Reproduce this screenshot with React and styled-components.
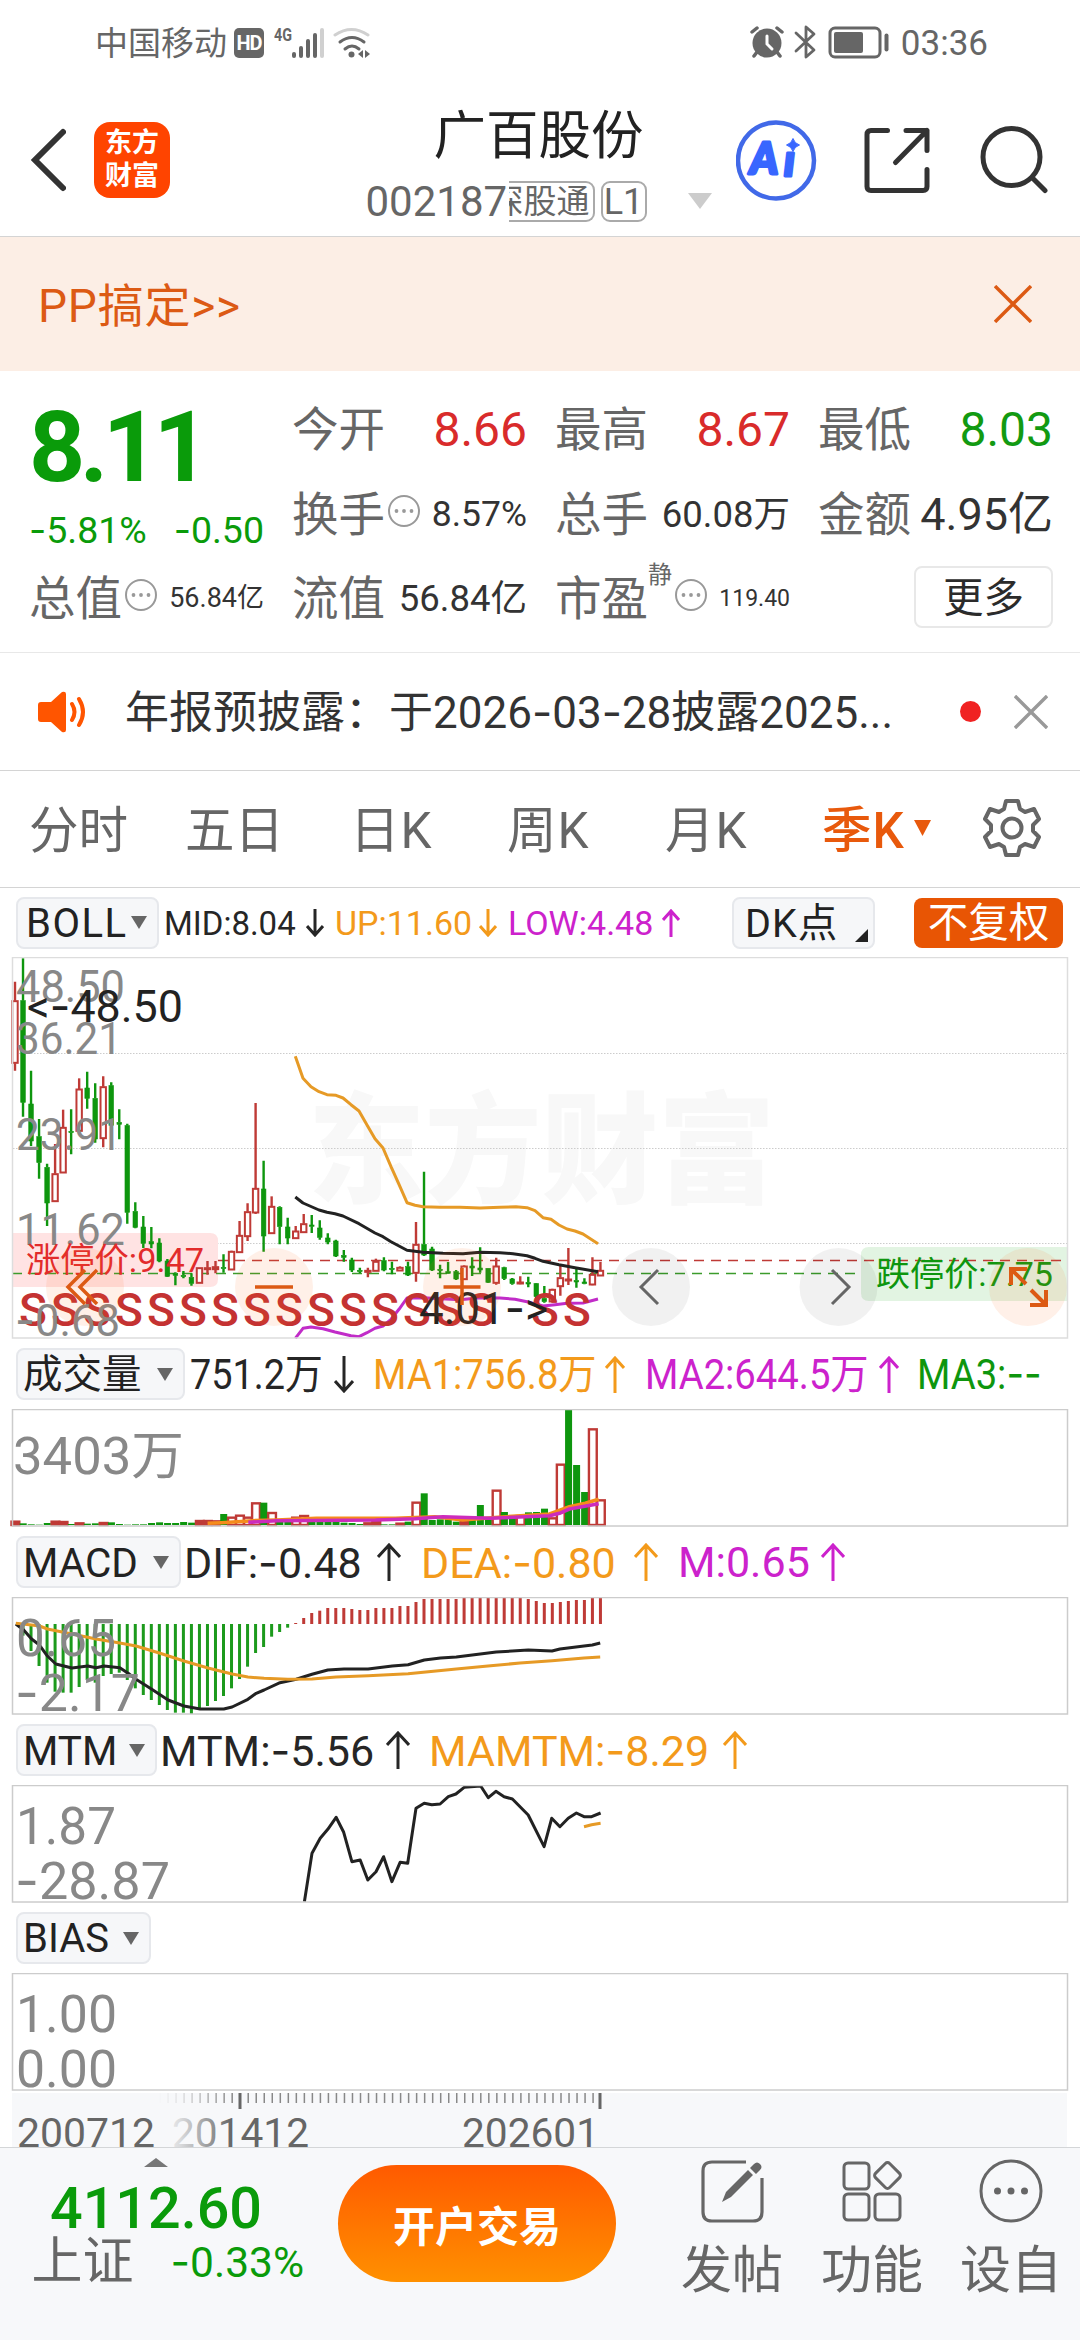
import React from "react";
import styled, { createGlobalStyle } from "styled-components";

const FONT = `Roboto, "Noto Sans CJK SC", sans-serif`;

const GlobalStyle = createGlobalStyle`
  * {
    box-sizing: border-box;
  }
  body {
    margin: 0;
    background: #fff;
    font-family: ${FONT};
    color: #2b2b2b;
  }
  svg {
    display: block;
    flex: none;
  }
`;

const Page = styled.div`
  width: 1080px;
  height: 2340px;
  overflow: hidden;
  display: flex;
  flex-direction: column;
  background: #fff;
`;

// one line of text, w keeps the columns aligned, sx squeezes the glyphs
const Txt = styled.span`
  display: block;
  flex: none;
  white-space: nowrap;
  line-height: 1.2;
  padding-top: 2px;
  transform-origin: 0 50%;
  font-size: ${(p) => p.$size}px;
  color: ${(p) => p.$color || "inherit"};
  font-weight: ${(p) => p.$weight || 400};
  letter-spacing: ${(p) => p.$ls || 0}px;
  width: ${(p) => (p.$w ? p.$w + "px" : "auto")};
  margin-left: ${(p) => p.$ml || 0}px;
  transform: ${(p) => (p.$sx ? `scaleX(${p.$sx})` : "none")};
`;

// Roboto's minus is too short for numbers
const Dash = styled.span`
  font-family: Inter, sans-serif;
`;
const dashed = (text) =>
  text.split(/(-)/).map((part, i) => (part === "-" ? <Dash key={i}>-</Dash> : part));

/* ---------- status bar ---------- */
const StatusBar = styled.div`
  height: 84px;
  flex: none;
  display: flex;
  align-items: center;
  justify-content: space-between;
  padding: 2px 92px 0 95px;
  color: #666;
`;
const StatusGroup = styled.div`
  display: flex;
  align-items: center;
`;
const HdBadge = styled.div`
  width: 30px;
  height: 30px;
  margin: 0 10px 0 7px;
  border-radius: 5px;
  background: #666;
  color: #fff;
  font-size: 20px;
  font-weight: 700;
  letter-spacing: -1px;
  line-height: 30px;
  text-align: center;
`;

const StatusIcons = () => (
  <StatusBar>
    <StatusGroup>
      <Txt $size={33}>中国移动</Txt>
      <HdBadge>HD</HdBadge>
      <svg width="98" height="32" viewBox="274 26 98 32">
        <text x="274" y="40" fontSize="18" fontWeight="700" fill="#666" textLength="18" lengthAdjust="spacingAndGlyphs">4G</text>
        <g fill="#666">
          <rect x="292" y="51" width="4" height="6" rx="2" />
          <rect x="299" y="45" width="4" height="12" rx="2" />
          <rect x="306" y="38" width="4" height="19" rx="2" />
          <rect x="313" y="32" width="4" height="25" rx="2" />
          <rect x="320" y="27" width="4" height="30" rx="2" fill="#d0d0d0" />
          <circle cx="351.500" cy="53.500" r="3" />
          <path d="M358 53l5-4v8zM370 53l-5-4v8z" />
        </g>
        <g fill="none" stroke="#666" strokeWidth="3" strokeLinecap="round">
          <path d="M335 34q16.500-11 33 0" stroke="#d0d0d0" />
          <path d="M340 41q12-9 24 0" />
          <path d="M345 48q7-6 14 0" />
        </g>
      </svg>
    </StatusGroup>
    <StatusGroup>
      <svg width="140" height="36" viewBox="748 25 140 36">
        <circle cx="765" cy="43" r="14.500" fill="#666" />
        <g fill="none" stroke="#666" strokeWidth="3.500" strokeLinecap="round">
          <path d="M750 32l5-4M780 32l-5-4M755 52l-3 4M775 52l3 4" />
          <path d="M765 36v8l5 5" stroke="#fff" strokeWidth="3" />
          <path d="M794 33l18 17-8 7v-30l8 7-18 17" strokeWidth="2.800" strokeLinejoin="round" />
          <rect x="828" y="28" width="50" height="29" rx="5" strokeWidth="3" />
          <path d="M884.500 35.500v14" strokeWidth="4" />
        </g>
        <rect x="832" y="32" width="29" height="21" rx="2" fill="#666" />
      </svg>
      <Txt $size={35} $ml={11}>03:36</Txt>
    </StatusGroup>
  </StatusBar>
);

/* ---------- header ---------- */
const HeaderBar = styled.div`
  height: 153px;
  flex: none;
  display: flex;
  align-items: center;
  padding-left: 30px;
  border-bottom: 1px solid #d4d4d4;
`;
const Logo = styled.div`
  width: 76px;
  height: 76px;
  margin: 0 196px 0 28px;
  padding-top: 5px;
  border-radius: 16px;
  background: #ff4400;
  color: #fff;
  font-size: 27px;
  font-weight: 700;
  line-height: 33px;
  text-align: center;
`;
const TitleBlock = styled.div`
  width: 345px;
  margin-right: 25px;
  padding-top: 20px;
  display: flex;
  flex-direction: column;
  align-items: center;
`;
const Title = styled.div`
  height: 62px;
  line-height: 64px;
  font-size: 52.5px;
  color: #222;
`;
const SubTitle = styled.div`
  height: 70px;
  display: flex;
  align-items: center;
  color: #666;
`;
const CutTag = styled.div`
  width: 86px;
  height: 41px;
  display: flex;
  justify-content: flex-end;
  overflow: hidden;
  padding-right: 3px;
  border: 2px solid #aaa;
  border-left: 0;
  border-radius: 0 9px 9px 0;
  font-size: 33px;
  line-height: 38px;
  white-space: nowrap;
`;
const LevelTag = styled.div`
  width: 46px;
  height: 41px;
  margin: 0 41px 0 6px;
  border: 2px solid #aaa;
  border-radius: 9px;
  font-size: 36px;
  line-height: 39px;
  text-align: center;
`;

const Triangle = ({ w = 16, h = 13, color = "#666", up }) => (
  <svg width={w} height={h} viewBox="0 0 10 10" preserveAspectRatio="none">
    <path d={up ? "M0 10h10L5 0z" : "M0 0h10L5 10z"} fill={color} />
  </svg>
);

const Header = () => (
  <HeaderBar>
    <svg width="36" height="64" viewBox="0 0 36 64">
      <path d="M33 4L5 32l28 28" fill="none" stroke="#333" strokeWidth="6" strokeLinecap="round" />
    </svg>
    <Logo>
      东方
      <br />
      财富
    </Logo>
    <TitleBlock>
      <Title>广百股份</Title>
      <SubTitle>
        <Txt $size={42} $w={143}>002187</Txt>
        <CutTag>深股通</CutTag>
        <LevelTag>L1</LevelTag>
        <Triangle w={24} h={16} color="#ccc" />
      </SubTitle>
    </TitleBlock>
    <svg width="312" height="84" viewBox="735 118.500 312 84">
      <circle cx="775" cy="161" r="38" fill="none" stroke="#4169e8" strokeWidth="4.500" />
      <g fill="#3866ff" stroke="#3866ff" strokeWidth="3" strokeLinejoin="round" fontFamily="Lato" fontWeight="900" fontStyle="italic">
        <text x="749" y="174.500" fontSize="43">A</text>
        <text x="783" y="176.500" fontSize="43">ı</text>
      </g>
      <path d="M792 139q1.500 5 6.500 6.500-5 1.500-6.500 6.500-1.500-5-6.500-6.500 5-1.500 6.500-6.500z" fill="#3866ff" stroke="#3866ff" />
      <g fill="none" stroke="#333" strokeWidth="5" strokeLinecap="round" strokeLinejoin="round">
        <path d="M886.500 131H870q-4 0-4 4v52q0 4 4 4h52q4 0 4-4v-17" />
        <path d="M905 131h21v20M926 131l-31.500 32" />
        <circle cx="1010.500" cy="157.500" r="28.500" />
        <path d="M1032 179l12 12" />
      </g>
    </svg>
  </HeaderBar>
);

/* ---------- promo banner ---------- */
const Banner = styled.div`
  height: 134px;
  flex: none;
  display: flex;
  align-items: center;
  justify-content: space-between;
  padding: 0 48px 0 38px;
  background: #fceee5;
`;
const Close = ({ size, color, width }) => (
  <svg width={size} height={size} viewBox="0 0 36 36">
    <path d="M1 1l34 34M35 1L1 35" stroke={color} strokeWidth={width} />
  </svg>
);

/* ---------- quote ---------- */
const QuoteGrid = styled.div`
  height: 282px;
  flex: none;
  display: grid;
  grid-template-columns: repeat(4, 235px);
  grid-template-rows: 85px 85px 83px;
  column-gap: 28px;
  padding: 15px 0 0 29px;
  border-bottom: 1px solid #e8e8e8;
`;
const PriceCell = styled.div`
  grid-row: span 2;
  color: #0a9b0a;
`;
const Price = styled.div`
  height: 120px;
  line-height: 123px;
  font-size: 98px;
  font-weight: 700;
  letter-spacing: -5.5px;
`;
const Change = styled.div`
  display: flex;
  justify-content: space-between;
  line-height: 47px;
  font-size: 37.5px;
`;
const Cell = styled.div`
  display: flex;
  align-items: center;
  justify-content: space-between;
`;
const CellLabel = styled.div`
  display: flex;
  align-items: center;
  padding-top: 3px;
  font-size: 46.5px;
  line-height: 60px;
  color: #666;
  white-space: nowrap;
`;
const Sup = styled.span`
  align-self: flex-start;
  margin-top: -9px;
  font-size: 24px;
  line-height: 30px;
`;
const MoreButton = styled.div`
  justify-self: end;
  align-self: center;
  width: 139px;
  height: 62px;
  margin-top: -2px;
  border: 2px solid #e8e8e8;
  border-radius: 8px;
  font-size: 40.5px;
  line-height: 60px;
  text-align: center;
`;

const InfoDots = () => (
  <svg width="34" height="34" viewBox="0 0 34 34" style={{ margin: "-8px 0 0 2px" }}>
    <circle cx="17" cy="17" r="15" fill="none" stroke="#999" strokeWidth="2" />
    <g fill="#999">
      <circle cx="9.500" cy="17" r="1.900" />
      <circle cx="17" cy="17" r="1.900" />
      <circle cx="24.500" cy="17" r="1.900" />
    </g>
  </svg>
);

const cells = [
  { label: "今开", value: "8.66", size: 48, color: "#d92b2b" },
  { label: "最高", value: "8.67", size: 48, color: "#d92b2b" },
  { label: "最低", value: "8.03", size: 48, color: "#129a12" },
  { label: "换手", value: "8.57%", size: 35.5, info: true },
  { label: "总手", value: "60.08万", size: 36.5 },
  { label: "金额", value: "4.95亿", size: 45 },
  { label: "总值", value: "56.84亿", size: 27, info: true },
  { label: "流值", value: "56.84亿", size: 36.5 },
  { label: "市盈", value: "119.40", size: 23, info: true, sup: "静" },
];

const Quote = () => (
  <QuoteGrid>
    <PriceCell>
      <Price>8.11</Price>
      <Change>
        <span>{dashed("-5.81%")}</span>
        <span>{dashed("-0.50")}</span>
      </Change>
    </PriceCell>
    {cells.map((c) => (
      <Cell key={c.label}>
        <CellLabel>
          {c.label}
          {c.sup && <Sup>{c.sup}</Sup>}
          {c.info && <InfoDots />}
        </CellLabel>
        <Txt $size={c.size} $color={c.color || "#333"}>{c.value}</Txt>
      </Cell>
    ))}
    <MoreButton>更多</MoreButton>
  </QuoteGrid>
);

/* ---------- notice ---------- */
const NoticeBar = styled.div`
  height: 118px;
  flex: none;
  display: flex;
  align-items: center;
  padding-left: 38px;
  border-bottom: 1px solid #d4d4d4;
`;
const RedDot = styled.div`
  width: 21px;
  height: 21px;
  margin: 0 33px 0 65px;
  border-radius: 50%;
  background: #f02222;
`;

const Notice = () => (
  <NoticeBar>
    <svg width="50" height="42" viewBox="0 0 50 42">
      <path d="M3 11h10L24 1q4-1 4 2v36q0 3-4 2L13 31H3q-3 0-3-3V14q0-3 3-3z" fill="#ff5500" />
      <path d="M34 13q5 8 0 16M41 8q8 13 0 26" fill="none" stroke="#ff5500" strokeWidth="4" strokeLinecap="round" />
    </svg>
    <Txt $size={44} $ml={37} $w={770} $color="#333">{dashed("年报预披露：于2026-03-28披露2025...")}</Txt>
    <RedDot />
    <Close size={34} color="#999" width={3.6} />
  </NoticeBar>
);

/* ---------- period tabs ---------- */
const Tabs = styled.div`
  height: 117px;
  flex: none;
  display: flex;
  align-items: center;
  padding: 4px 0 0 29px;
  border-bottom: 1px solid #d4d4d4;
  color: #666;
`;

const PeriodTabs = () => (
  <Tabs>
    <Txt $size={49.5} $w={156}>分时</Txt>
    <Txt $size={49.5} $w={165}>五日</Txt>
    <Txt $size={49.5} $ls={1} $w={157}>日K</Txt>
    <Txt $size={49.5} $ls={1} $w={158}>周K</Txt>
    <Txt $size={49.5} $ls={1} $w={157}>月K</Txt>
    <Txt $size={49.5} $ls={1} $w={92} $color="#e8590c" $weight={500}>季K</Txt>
    <svg width="17" height="22" viewBox="0 0 17 22">
      <path d="M0 0h17L8.500 16z" fill="#e8590c" />
    </svg>
    <svg width="60" height="60" viewBox="-30 -30 60 60" style={{ marginLeft: 51, marginTop: -6 }}>
      <path
        d="M-6-27H6L8-19 13-16 22-19 27-9 21-3V3L27 9 22 19 13 16 8 19 6 27H-6L-8 19-13 16-22 19-27 9-21 3V-3L-27-9-22-19-13-16-8-19z"
        fill="none"
        stroke="#666"
        strokeWidth="4"
        strokeLinejoin="round"
      />
      <circle r="9.500" fill="none" stroke="#666" strokeWidth="4" />
    </svg>
  </Tabs>
);

/* ---------- indicator rows ---------- */
const IndicatorRow = styled.div`
  height: ${(p) => p.$h || 70}px;
  flex: none;
  display: flex;
  align-items: center;
  padding-left: 16px;
`;
const Chip = styled.div`
  width: ${(p) => p.$w}px;
  height: 52px;
  flex: none;
  display: flex;
  align-items: center;
  justify-content: space-between;
  margin-right: ${(p) => (p.$gap === undefined ? 5 : p.$gap)}px;
  padding: 0 10px 0 ${(p) => p.$pl || 5}px;
  border: 2px solid #e6e8ec;
  border-radius: 8px;
  background: #f6f7f9;
  color: #222;
`;
const Solid = styled.div`
  width: 149px;
  height: 50px;
  border-radius: 8px;
  background: #e85504;
  color: #fff;
  font-size: 40.5px;
  line-height: 51px;
  text-align: center;
`;

const ORANGE = "#f39a1b";
const PURPLE = "#cc22cc";
const DARK = "#262626";

const Arrow = ({ up, color, w = 20, h = 37, ml = 10 }) => (
  <svg width={w} height={h} viewBox={`0 0 ${w} ${h}`} style={{ marginLeft: ml }}>
    <path
      d={up ? `M${w / 2} ${h}V2M1 ${w / 2 + 2}L${w / 2} 2 ${w - 1} ${w / 2 + 2}` : `M${w / 2} 0V${h - 2}M1 ${h - w / 2 - 2}L${w / 2} ${h - 2} ${w - 1} ${h - w / 2 - 2}`}
      fill="none"
      stroke={color}
      strokeWidth="3"
    />
  </svg>
);

/* ---------- chart data ---------- */
// high, open/close box top, box bottom, low (thirds of a pixel), 1 = rising
const candles = [
  [125, 182, 370, 392, 1], [55, 182, 487, 530, 0], [392, 492, 603, 618, 0], [537, 590, 668, 716, 0],
  [671, 682, 789, 858, 0], [612, 701, 785, 785, 1], [509, 562, 699, 699, 1], [508, 574, 578, 643, 0],
  [415, 447, 574, 574, 1], [395, 444, 475, 506, 0], [430, 475, 597, 608, 0], [409, 440, 596, 622, 1],
  [427, 437, 556, 570, 0], [508, 547, 553, 598, 0], [551, 557, 817, 851, 0], [787, 814, 862, 865, 0],
  [828, 861, 910, 924, 0], [861, 905, 912, 925, 0], [895, 909, 963, 967, 0], [957, 963, 1009, 1011, 0],
  [997, 1000, 1006, 1036, 0], [993, 1006, 1010, 1015, 0], [1000, 1012, 1030, 1037, 0], [983, 983, 1030, 1030, 1],
  [963, 983, 987, 1004, 1], [963, 980, 989, 1000, 1], [943, 982, 986, 998, 0], [932, 934, 990, 990, 1],
  [843, 886, 938, 938, 1], [790, 815, 890, 903, 1], [489, 745, 819, 822, 1], [662, 747, 888, 935, 0],
  [769, 799, 881, 881, 1], [799, 802, 860, 913, 0], [833, 861, 894, 913, 0], [858, 873, 896, 896, 1],
  [822, 851, 878, 878, 1], [825, 855, 859, 879, 0], [841, 864, 892, 899, 0], [880, 894, 906, 913, 0],
  [899, 903, 948, 951, 0], [930, 946, 952, 965, 0], [953, 960, 990, 996, 0], [983, 991, 995, 1000, 0],
  [983, 991, 997, 1012, 1], [956, 964, 994, 994, 1], [952, 962, 990, 994, 0], [965, 985, 989, 1003, 0],
  [979, 982, 993, 993, 1], [965, 980, 1005, 1008, 0], [846, 913, 1000, 1025, 1], [695, 913, 945, 948, 0],
  [920, 927, 990, 993, 0], [974, 988, 992, 1015, 0], [966, 995, 1000, 1001, 0], [990, 995, 1017, 1020, 0],
  [976, 978, 1019, 1019, 1], [952, 978, 984, 1008, 0], [922, 984, 990, 998, 0], [984, 985, 1027, 1029, 0],
  [953, 978, 1030, 1034, 1], [980, 983, 1016, 1020, 0], [1014, 1017, 1031, 1034, 0], [1009, 1026, 1032, 1033, 1],
  [1010, 1027, 1032, 1042, 0], [1029, 1031, 1070, 1085, 0], [1038, 1075, 1085, 1088, 0], [1046, 1048, 1086, 1087, 1],
  [976, 1013, 1040, 1067, 1], [924, 1017, 1022, 1035, 1], [987, 1021, 1026, 1043, 0], [1015, 1026, 1031, 1033, 0],
  [952, 1003, 1035, 1036, 1], [966, 991, 1008, 1008, 1],
];
const bollUp = [[295.3, 349], [303, 415], [311, 440], [319, 455], [327, 464], [336, 466], [343, 474], [351, 494], [359, 513], [367, 555], [375, 596], [383, 624], [391, 680], [399, 733], [407, 788], [415, 796], [423, 800], [440, 802], [460, 802], [480, 804], [500, 802], [516, 800], [527, 803], [535, 812], [543, 833], [551, 838], [559, 855], [567, 867], [575, 873], [583, 882], [598, 911]];
const bollMid = [[295.3, 771], [303, 789], [319, 810], [327, 817], [335, 821], [343, 828], [359, 851], [375, 879], [383, 890], [391, 905], [407, 931], [423, 937], [443, 940], [463, 941], [480, 937], [500, 938], [513, 941], [527, 947], [535, 955], [543, 964], [559, 974], [575, 983], [598, 995]];
const bollLow = [[295.3, 1195], [303, 1165], [311, 1161], [323, 1166], [335, 1176], [351, 1187], [359, 1190], [367, 1178], [375, 1165], [383, 1158], [391, 1138], [399, 1108], [407, 1074], [423, 1073], [460, 1079], [480, 1073], [500, 1074], [515, 1078], [527, 1085], [543, 1098], [555, 1094], [567, 1090], [583, 1089], [598, 1077]];

const volume = [542, 550, 553, 554, 549, 542, 543, 552, 547, 551, 550, 546, 547, 552, 554, 553, 553, 549, 547, 549, 549, 546, 548, 540, 540, 541, 522, 530, 524, 530, 487, 488, 516, 545, 545, 530, 525, 543, 544, 545, 546, 548, 549, 552, 547, 543, 553, 553, 548, 545, 485, 460, 540, 538, 538, 545, 542, 540, 495, 532, 449, 516, 530, 525, 517, 516, 506, 532, 371, 210, 375, 456, 265, 478];
const risingVolume = [0, 5, 6, 8, 11, 23, 24, 25, 27, 28, 29, 30, 32, 35, 36, 44, 45, 48, 50, 56, 60, 63, 67, 68, 72, 73];
const volMa1 = [[525, 550], [560, 548], [640, 542], [700, 540], [800, 535], [1000, 535], [1100, 530], [1170, 540], [1260, 532], [1390, 522], [1440, 500], [1480, 490], [1514, 478]];
const volMa2 = [[628, 547], [700, 542], [950, 540], [1050, 536], [1120, 530], [1240, 535], [1300, 532], [1390, 527], [1415, 520], [1440, 507], [1514, 491]];

const macdBars = [887, 933, 978, 1028, 1055, 1058, 1058, 1041, 1020, 1028, 1008, 1002, 998, 1020, 1045, 1065, 1080, 1095, 1110, 1118, 1118, 1122, 1110, 1098, 1083, 1068, 1045, 1017, 980, 939, 921, 890, 876, 863, 849, 834, 819, 812, 804, 804, 804, 807, 810, 810, 804, 804, 804, 798, 798, 786, 777, 777, 777, 777, 777, 774, 771, 771, 774, 771, 771, 774, 774, 777, 783, 789, 789, 786, 783, 780, 780, 774, 771];
const dif = [[40, 852], [60, 870], [80, 897], [100, 915], [120, 948], [141, 972], [182, 984], [222, 978], [243, 983], [263, 978], [303, 983], [324, 1000], [344, 1018], [384, 1048], [425, 1080], [465, 1098], [506, 1107], [566, 1107], [587, 1101], [627, 1078], [648, 1060], [668, 1050], [708, 1028], [749, 1018], [789, 1003], [829, 990], [870, 987], [931, 987], [992, 978], [1032, 974], [1073, 960], [1114, 954], [1154, 951], [1255, 936], [1336, 930], [1396, 933], [1416, 927], [1477, 918], [1498, 915], [1518, 909]];
const dea = [[40, 850], [80, 855], [100, 858], [120, 867], [182, 882], [243, 897], [303, 909], [344, 918], [405, 940], [465, 963], [526, 984], [587, 1002], [627, 1011], [668, 1015], [728, 1018], [789, 1017], [850, 1011], [931, 1007], [1032, 1001], [1154, 987], [1234, 978], [1315, 969], [1396, 962], [1477, 954], [1518, 951]];

const mtm = [[442, 605], [453, 460], [465, 415], [476, 388], [488, 352], [499, 397], [511, 485], [523, 480], [534, 540], [546, 515], [557, 470], [569, 545], [581, 487], [592, 490], [604, 325], [616, 310], [627, 314], [639, 312], [651, 290], [662, 282], [674, 262], [698, 258], [709, 293], [720, 274], [732, 290], [744, 297], [767, 345], [790, 440], [801, 355], [813, 380], [825, 355], [837, 339], [848, 350], [859, 350], [872, 339]];
const mamtm = [[848, 380], [859, 374], [872, 370]];

const RED = "#bf3a36";
const GREEN = "#0e960e";

const Line = ({ pts, kx = 1, oy, color, w = 3 }) => (
  <polyline
    points={pts.map(([x, y]) => `${(x / kx).toFixed(1)},${(oy + y / 3).toFixed(1)}`).join(" ")}
    fill="none"
    stroke={color}
    strokeWidth={w}
    strokeLinejoin="round"
  />
);

const AxisText = ({ x, y, w, size = 52, color = "#888", children }) => (
  <text x={x} y={y} fontSize={size} fill={color} textLength={w} lengthAdjust="spacingAndGlyphs">
    {children.split(/(-)/).map((part, i) =>
      part === "-" ? <tspan key={i} fontFamily="Inter">-</tspan> : part
    )}
  </text>
);

const Chart = ({ top, height = 118, stroke = "#ccc", children }) => (
  <svg width="1080" height={height} viewBox={`0 ${top} 1080 ${height}`} fontFamily={FONT}>
    {children}
    <rect x="12.500" y={top + 0.5} width="1055" height={height - 1.5} fill="none" stroke={stroke} strokeWidth="1.500" />
  </svg>
);

const cx = (i) => 15 + i * 8.02;
const cy = (v) => 940 + v / 3;

const PriceChart = () => (
  <Chart top={957} height={382} stroke="#ddd">
    <text x="308" y="1194" fontSize="120" fontWeight="900" fill="#f8f8f8" textLength="467" lengthAdjust="spacingAndGlyphs">东方财富</text>
    {[1053.5, 1148.5, 1243.5].map((y) => (
      <path key={y} d={`M13 ${y}H1067`} stroke="#ccc" strokeDasharray="1.500 1.500" />
    ))}
    <path d="M12 1233H210q8 0 8 8v38q0 8-8 8H12z" fill="#ffe3e3" />
    <path d="M1067 1247H869q-8 0-8 8v38q0 8 8 8h198z" fill="#e2f4e2" />
    <path d="M218 1260.500H1067" stroke={RED} strokeWidth="1.300" strokeDasharray="10 7" />
    <path d="M12 1273.500H861" stroke="#3c9c2c" strokeWidth="1.300" strokeDasharray="10 7" />

    {candles.map(([h, t, b, l, up], i) => (
      <g key={i} stroke={up ? RED : GREEN} strokeWidth="2.400">
        <path d={`M${cx(i)} ${cy(h)}V${cy(t)}M${cx(i)} ${cy(b)}V${cy(l)}`} />
        {up ? (
          <rect x={cx(i) - 2.7} y={cy(t) + 0.5} width="5.400" height={Math.max(1, (b - t) / 3 - 1)} fill="#fff" strokeWidth="2" />
        ) : (
          <rect x={cx(i) - 2.3} y={cy(t)} width="4.600" height={Math.max(0.6, (b - t) / 3)} fill={GREEN} strokeWidth="0.600" />
        )}
      </g>
    ))}
    <Line pts={bollLow} oy={940} color="#c12cc8" />
    {[0, 1, 2, 3, 4, 5, 6, 7, 8, 9, 10, 11, 12, 13, 14, 16, 17].map((i) => (
      <text key={i} x={33 + i * 32} y="1326" fontSize="46" fontWeight="500" fill="#c43232" textAnchor="middle">S</text>
    ))}
    <Line pts={bollUp} oy={940} color="#e69a26" />
    <Line pts={bollMid} oy={940} color="#222" />

    <AxisText x={16} y={1002} w={109} size={45}>48.50</AxisText>
    <AxisText x={16} y={1054} w={106} size={45}>36.21</AxisText>
    <AxisText x={16} y={1149.5} w={106} size={45}>23.91</AxisText>
    <AxisText x={16} y={1245} w={109} size={45}>11.62</AxisText>
    <AxisText x={15} y={1336} w={105} size={45}>-0.68</AxisText>
    <AxisText x={27} y={1022} w={156} size={45} color="#222">{"<-48.50"}</AxisText>
    <AxisText x={419} y={1324} w={129} size={45} color="#222">{"4.01->"}</AxisText>
    <AxisText x={26} y={1272} w={178} size={34} color="#e22b2b">涨停价:9.47</AxisText>
    <AxisText x={876} y={1286} w={177} size={34} color="#0e960e">跌停价:7.75</AxisText>

    {[85, 274, 462, 1028].map((x) => (
      <circle key={x} cx={x} cy="1287" r="39" fill="#ff6a1a" fillOpacity="0.100" />
    ))}
    {[651, 838.5].map((x) => (
      <circle key={x} cx={x} cy="1287" r="39" fill="#000" fillOpacity="0.055" />
    ))}
    <g fill="none" stroke="#dc5a14" strokeWidth="3.500">
      <path d="M85 1270l-17 17 17 17M97 1270l-17 17 17 17M255 1287h38M443.500 1287h37M462 1268v37" />
      <path d="M1011 1285v-16h16M1011 1269l15 15M1046 1290v15h-16M1046 1305l-15-15" strokeWidth="4" />
    </g>
    <path d="M658 1270l-17 17 17 17M832 1270l17 17-17 17" fill="none" stroke="#666" strokeWidth="3" />
  </Chart>
);

const VolumeChart = () => (
  <Chart top={1409}>
    {volume.map((v, i) => {
      const x = 15.2 + i * 8.02;
      const top = 1340 + v / 3;
      const h = (555 - v) / 3;
      return risingVolume.includes(i) ? (
        <rect key={i} x={x - 3.7} y={top + 1} width="7.800" height={Math.max(1, h - 1)} fill={h < 6 ? RED : "#fff"} stroke={RED} strokeWidth="2.400" />
      ) : (
        <rect key={i} x={x - 3.5} y={top} width="7" height={h} fill={GREEN} />
      );
    })}
    <Line pts={volMa1} kx={2.529} oy={1340} color="#f58c1c" w={3.6} />
    <Line pts={volMa2} kx={2.529} oy={1340} color="#cc2cbc" w={3.6} />
    <AxisText x={13} y={1474} w={171}>3403万</AxisText>
  </Chart>
);

const MacdChart = () => (
  <Chart top={1597}>
    {macdBars.map((v, i) => {
      const y = 1340 + v / 3;
      return <rect key={i} x={21.5 + i * 8.02} y={Math.min(y, 1624)} width="3" height={Math.max(1, Math.abs(1624 - y))} fill={v > 852 ? "#1c9a1c" : RED} />;
    })}
    <Line pts={dif} kx={2.529} oy={1340} color="#222" w={3} />
    <Line pts={dea} kx={2.529} oy={1340} color="#e69a26" w={3} />
    <AxisText x={16} y={1656} w={100}>0.65</AxisText>
    <AxisText x={15} y={1711} w={125}>-2.17</AxisText>
  </Chart>
);

const MtmChart = () => (
  <Chart top={1785}>
    <Line pts={mtm} kx={1.452} oy={1700} color="#222" />
    <Line pts={mamtm} kx={1.452} oy={1700} color="#e69a26" />
    <AxisText x={16} y={1844} w={100}>1.87</AxisText>
    <AxisText x={15} y={1899} w={155}>-28.87</AxisText>
  </Chart>
);

const BiasChart = () => (
  <Chart top={1973}>
    <AxisText x={16} y={2031.5} w={101}>1.00</AxisText>
    <AxisText x={16} y={2087} w={101}>0.00</AxisText>
  </Chart>
);

const TimeAxis = () => (
  <svg width="1080" height="56" viewBox="0 2091 1080 56" fontFamily={FONT}>
    <defs>
      <linearGradient id="fade" gradientUnits="userSpaceOnUse" x1="158" y1="0" x2="232" y2="0">
        <stop offset="0" stopColor="#f7f8fa" />
        <stop offset="0.300" stopColor="#f7f8fa" stopOpacity="0.800" />
        <stop offset="1" stopColor="#f7f8fa" stopOpacity="0" />
      </linearGradient>
    </defs>
    <rect x="12" y="2093" width="1055" height="54" fill="#f7f8fa" />
    {Array.from({ length: 55 }, (_, i) => (
      <path key={i} d={`M${160 + i * 8.02} 2093v10`} stroke="#888" strokeWidth="1.500" />
    ))}
    <path d="M240 2093v16M600 2093v16" stroke="#666" strokeWidth="3" />
    <AxisText x={172} y={2147} w={137} size={41} color="#666">201412</AxisText>
    <rect x="158" y="2093" width="74" height="54" fill="url(#fade)" />
    <AxisText x={17} y={2147} w={138} size={41} color="#666">200712</AxisText>
    <AxisText x={462} y={2147} w={137} size={41} color="#666">202601</AxisText>
  </svg>
);

/* ---------- bottom bar ---------- */
const BottomBar = styled.div`
  height: 193px;
  flex: none;
  display: flex;
  background: #f7f8fa;
  border-top: 1px solid #d4d6d8;
`;
const IndexBox = styled.div`
  width: 338px;
  padding-top: 10px;
  display: flex;
  flex-direction: column;
  align-items: center;
  padding-right: 26px;
`;
const IndexLine = styled.div`
  display: flex;
  align-items: center;
  height: 60px;
  margin-top: -12px;
`;
const TradeButton = styled.div`
  width: 278px;
  height: 117px;
  margin-top: 17px;
  border-radius: 59px;
  background: linear-gradient(#ff5a00, #ff9000);
  color: #fff;
  font-size: 42px;
  font-weight: 700;
  line-height: 125px;
  text-align: center;
`;
const Action = styled.div`
  width: ${(p) => p.$w}px;
  margin-left: ${(p) => p.$ml || 0}px;
  padding-top: 11px;
  display: flex;
  flex-direction: column;
  align-items: center;
  font-size: 51px;
  line-height: 60px;
  color: #666;
  svg {
    margin-bottom: 18px;
  }
`;

const Footer = () => (
  <BottomBar>
    <IndexBox>
      <Triangle up w={24} h={9} color="#777" />
      <Txt $size={57.5} $color="#0a9b0a" $weight={500} style={{ marginTop: 5 }}>4112.60</Txt>
      <IndexLine>
        <Txt $size={51} $color="#666" $ml={26}>上证</Txt>
        <Txt $size={42.5} $color="#0a9b0a" $ml={37} $w={136}>{dashed("-0.33%")}</Txt>
      </IndexLine>
    </IndexBox>
    <TradeButton>开户交易</TradeButton>
    <Action $w={140} $ml={46}>
      <svg width="64" height="64" viewBox="0 0 64 64">
        <path d="M46 3H12q-9 0-9 9v41q0 9 9 9h41q9 0 9-9V19" fill="none" stroke="#666" strokeWidth="3.200" />
        <path d="M22 43l4-10 22-22 5 5-22 22zM50 9l4-4q3-3 6 0t0 6l-4 4z" fill="#666" />
      </svg>
      发帖
    </Action>
    <Action $w={140}>
      <svg width="64" height="64" viewBox="0 0 64 64">
        <g fill="none" stroke="#666" strokeWidth="3">
          <rect x="4" y="4" width="25" height="26" rx="4" />
          <rect x="4" y="35" width="25" height="26" rx="4" />
          <rect x="35" y="35" width="25" height="26" rx="4" />
          <rect x="37.500" y="6.500" width="20" height="20" rx="3" transform="rotate(45 47.500 16.500)" />
        </g>
      </svg>
      功能
    </Action>
    <Action $w={138}>
      <svg width="64" height="64" viewBox="0 0 64 64">
        <circle cx="32" cy="32" r="30" fill="none" stroke="#666" strokeWidth="3" />
        <g fill="#666">
          <circle cx="18.500" cy="32" r="3.500" />
          <circle cx="32" cy="32" r="3.500" />
          <circle cx="45.500" cy="32" r="3.500" />
        </g>
      </svg>
      设自
    </Action>
  </BottomBar>
);

const App = () => {
  return (
    <>
      <GlobalStyle />
      <Page>
        <StatusIcons />
        <Header />
        <Banner>
          <Txt $size={46} $color="#dc5a14" $ls={0.8} style={{ paddingTop: 6 }}>PP搞定&gt;&gt;</Txt>
          <Close size={38} color="#dc5a14" width={3.2} />
        </Banner>
        <Quote />
        <Notice />
        <PeriodTabs />

        <IndicatorRow $h={69}>
          <Chip $w={143} $pl={8}>
            <Txt $size={40} $ls={1.5}>BOLL</Txt>
            <Triangle />
          </Chip>
          <Txt $size={34} $w={132} $sx={0.97} $color={DARK}>MID:8.04</Txt>
          <Arrow color={DARK} w={18} h={28} />
          <Txt $size={34} $w={134} $ml={11} $color={ORANGE}>UP:11.60</Txt>
          <Arrow color={ORANGE} w={18} h={28} />
          <Txt $size={34} $w={144} $ml={11} $color={PURPLE}>LOW:4.48</Txt>
          <Arrow up color={PURPLE} w={18} h={28} />
          <Chip $w={143} $pl={11} $gap={39} style={{ marginLeft: 52 }}>
            <Txt $size={39.5} $ls={1}>DK点</Txt>
            <svg width="13" height="13" style={{ alignSelf: "flex-end", marginBottom: 5, marginRight: -5 }}>
              <path d="M13 0v13H0z" fill="#222" />
            </svg>
          </Chip>
          <Solid>不复权</Solid>
        </IndicatorRow>
        <PriceChart />

        <IndicatorRow>
          <Chip $w={169} $pl={5}>
            <Txt $size={39.5}>成交量</Txt>
            <Triangle />
          </Chip>
          <Txt $size={42} $w={134} $sx={0.9} $color={DARK}>751.2万</Txt>
          <Arrow color={DARK} />
          <Txt $size={42} $w={222} $sx={0.91} $ml={19} $color={ORANGE}>MA1:756.8万</Txt>
          <Arrow up color={ORANGE} />
          <Txt $size={42} $w={224} $sx={0.91} $ml={20} $color={PURPLE}>MA2:644.5万</Txt>
          <Arrow up color={PURPLE} />
          <Txt $size={42} $sx={0.91} $ml={18} $color={GREEN}>{dashed("MA3:--")}</Txt>
        </IndicatorRow>
        <VolumeChart />

        <IndicatorRow>
          <Chip $w={165}>
            <Txt $size={40.5}>MACD</Txt>
            <Triangle />
          </Chip>
          <Txt $size={43} $w={183} $color={DARK} style={{ marginLeft: -2 }}>{dashed("DIF:-0.48")}</Txt>
          <Arrow up color={DARK} w={24} h={38} />
          <Txt $size={43} $w={203} $ml={20} $color={ORANGE}>{dashed("DEA:-0.80")}</Txt>
          <Arrow up color={ORANGE} w={24} h={38} />
          <Txt $size={43} $w={133} $ml={20} $color={PURPLE}>M:0.65</Txt>
          <Arrow up color={PURPLE} w={24} h={38} />
        </IndicatorRow>
        <MacdChart />

        <IndicatorRow>
          <Chip $w={141}>
            <Txt $size={40.5}>MTM</Txt>
            <Triangle />
          </Chip>
          <Txt $size={43} $w={216} $color={DARK} style={{ marginLeft: -2 }}>{dashed("MTM:-5.56")}</Txt>
          <Arrow up color={DARK} w={24} h={38} />
          <Txt $size={43} $w={284} $ml={19} $color={ORANGE}>{dashed("MAMTM:-8.29")}</Txt>
          <Arrow up color={ORANGE} w={24} h={38} />
        </IndicatorRow>
        <MtmChart />

        <IndicatorRow>
          <Chip $w={135}>
            <Txt $size={40}>BIAS</Txt>
            <Triangle />
          </Chip>
        </IndicatorRow>
        <BiasChart />
        <TimeAxis />
        <Footer />
      </Page>
    </>
  );
};

export default App;
